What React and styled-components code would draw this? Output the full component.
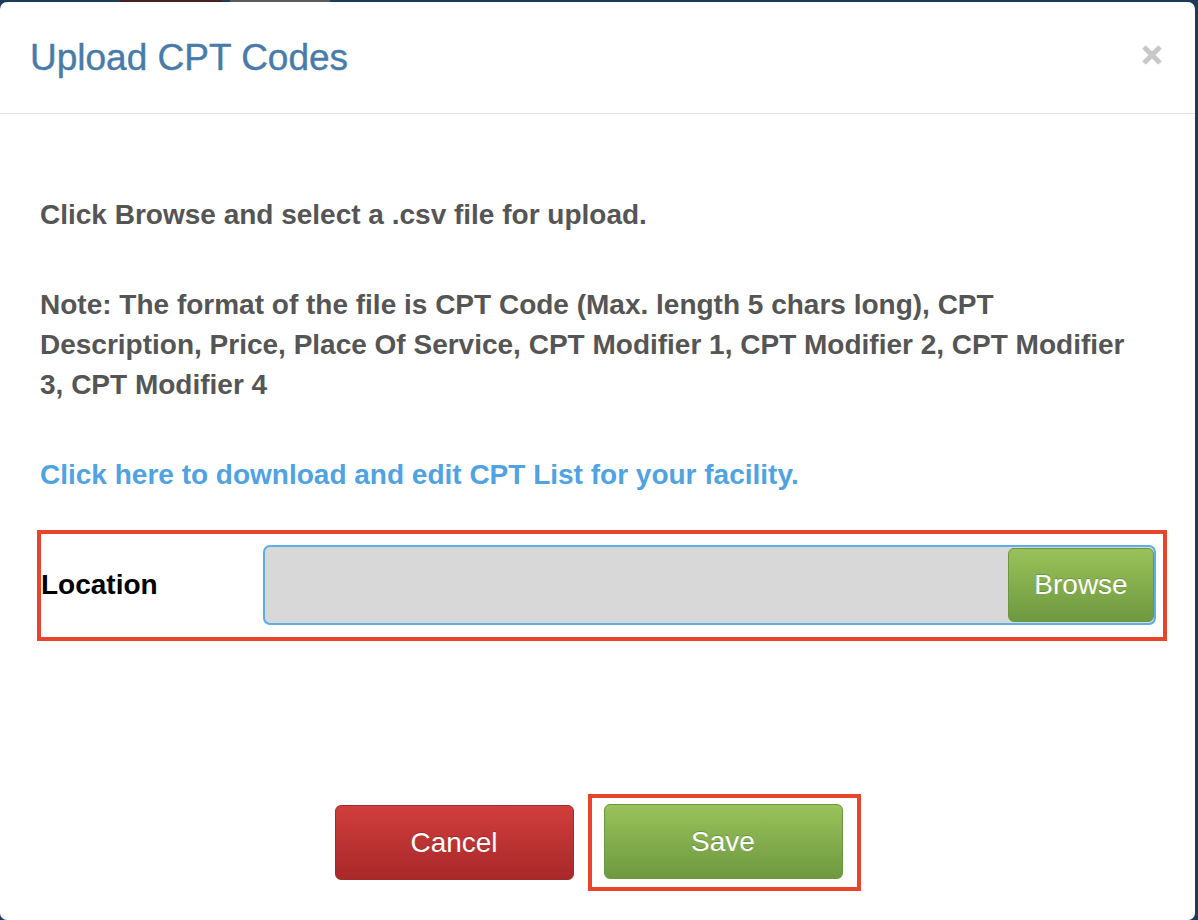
import React from 'react';
import styled, {createGlobalStyle} from 'styled-components';

const GlobalStyle = createGlobalStyle`
    html, body {
        margin: 0;
        padding: 0;
        height: 920px;
        overflow: hidden;
    }
    body {
        background: linear-gradient(to right, #1d3a56 0 120px, #4b1f21 120px 222px, #1d3a56 222px 230px, #5c5c5c 230px 330px, #1d3a56 330px);
        font-family: "Liberation Sans", Arial, Helvetica, sans-serif;
    }
`

const Modal = styled.div`
    margin: 2px 3px 0 0;
    height: 918px;
    background: #fff;
    border-radius: 7px;
    display: flex;
    flex-direction: column;
    overflow: hidden;
`
const Header = styled.div`
    display: flex;
    justify-content: space-between;
    align-items: center;
    padding: 36px 32px 35px 30px;
    border-bottom: 1px solid #e5e5e5;
`
const Title = styled.h2`
    margin: 0;
    font-size: 37px;
    line-height: 40px;
    font-weight: normal;
    color: #487ba9;
    -webkit-text-stroke: 0.4px #487ba9;
`
const CloseButton = styled.button`
    border: none;
    background: none;
    padding: 0;
    cursor: pointer;
    display: flex;
    margin-top: -6px;
`
const Body = styled.div`
    padding: 81px 48px 0 40px;
`
const Paragraph = styled.p`
    margin: 0 0 50px 0;
    font-size: 28px;
    line-height: 40px;
    font-weight: bold;
    color: #555;
`
const DownloadLink = styled.a`
    display: block;
    font-size: 28px;
    line-height: 40px;
    font-weight: bold;
    color: #4fa3e2;
    text-decoration: none;
    cursor: pointer;
`
const Highlight = styled.div`
    border: 4px solid #e8432b;
`
const LocationRow = styled(Highlight)`
    display: flex;
    align-items: center;
    margin: 35px -20px 0 -3px;
    padding: 11px 7px 12px 0;
`
const Label = styled.label`
    width: 222px;
    flex-shrink: 0;
    font-size: 28px;
    font-weight: bold;
    color: #000;
`
const FileInput = styled.div`
    flex: 1;
    height: 76px;
    display: flex;
    justify-content: flex-end;
    align-items: center;
    background: #d8d8d8;
    border: 2px solid #5aafe8;
    border-radius: 7px;
`
const Button = styled.button`
    height: ${p => p.$height || 75}px;
    width: ${p => p.$width || 239}px;
    border-radius: 6px;
    border: 1px solid ${p => p.$danger ? '#a32a2b' : '#6a9740'};
    background: ${p => p.$danger
        ? 'linear-gradient(to bottom, #d13e3c, #a8282a)'
        : 'linear-gradient(to bottom, #99c25b, #6e993f)'};
    color: #fff;
    font-family: "Liberation Sans", Arial, sans-serif;
    font-size: 28px;
    text-shadow: 0 -1px 0 rgba(0, 0, 0, 0.2);
    cursor: pointer;
    padding: 0;
`
const Footer = styled.div`
    display: flex;
    justify-content: center;
    align-items: center;
    gap: 14px;
    margin-top: 153px;
`
const SaveHighlight = styled(Highlight)`
    padding: 6px 14px 8px 12px;
    display: flex;
`

const CloseIcon = () => (
    <svg width="22" height="22" viewBox="0 0 22 22">
        <path d="M3 3 L19 19 M19 3 L3 19" stroke="#c8c8c8" strokeWidth="5" />
    </svg>
);

const App = () => {
    return (
        <>
            <GlobalStyle />
            <Modal>
                <Header>
                    <Title>Upload CPT Codes</Title>
                    <CloseButton aria-label="Close"><CloseIcon /></CloseButton>
                </Header>
                <Body>
                    <Paragraph>Click Browse and select a .csv file for upload.</Paragraph>
                    <Paragraph>
                        Note: The format of the file is CPT Code (Max. length 5 chars long), CPT Description, Price, Place Of Service, CPT Modifier 1, CPT Modifier 2, CPT Modifier 3, CPT Modifier 4
                    </Paragraph>
                    <DownloadLink>Click here to download and edit CPT List for your facility.</DownloadLink>
                    <LocationRow>
                        <Label htmlFor="file-input">Location</Label>
                        <FileInput id="file-input">
                            <Button $width={146} $height={74}>Browse</Button>
                        </FileInput>
                    </LocationRow>
                </Body>
                <Footer>
                    <Button $danger>Cancel</Button>
                    <SaveHighlight>
                        <Button>Save</Button>
                    </SaveHighlight>
                </Footer>
            </Modal>
        </>
    );
};

export default App;
